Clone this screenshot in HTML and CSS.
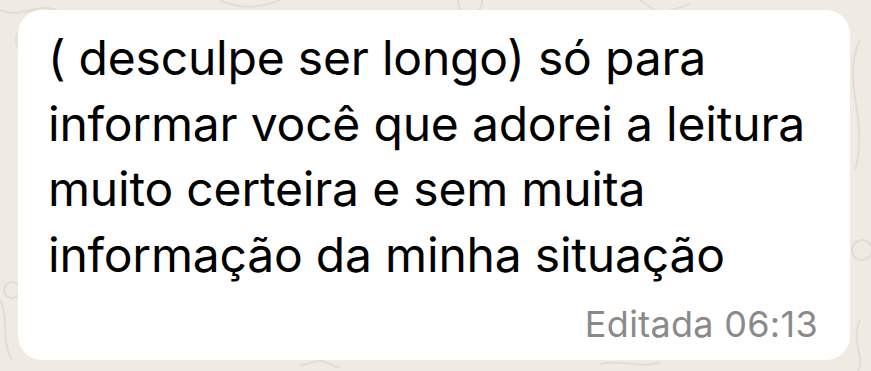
FILE: index.html
```html
<!DOCTYPE html>
<html lang="pt">

<head>
    <meta charset="UTF-8">
    <meta name="viewport" content="width=device-width, initial-scale=1.0">
    <title>Mensagem</title>
    <link rel="stylesheet" href="styles.css">
</head>

<body>
    <svg class="doodles" width="871" height="371" viewBox="0 0 871 371" fill="none" stroke="#e2dcd2" stroke-width="2">
        <circle cx="30" cy="40" r="14" />
        <path d="M0 10 C 20 20, 40 0, 60 12" />
        <path d="M220 0 C 240 10, 260 8, 280 0" />
        <circle cx="470" cy="2" r="12" />
        <path d="M640 0 L 660 14 L 690 4" />
        <path d="M860 40 C 840 80, 870 120, 855 170" />
        <circle cx="862" cy="250" r="10" />
        <path d="M0 300 C 10 320, 0 340, 12 360" />
        <circle cx="12" cy="290" r="8" />
        <path d="M860 320 C 850 340, 866 360, 858 371" />
        <path d="M300 366 L 320 360 L 340 368" />
        <path d="M600 364 C 620 358, 640 370, 660 362" />
    </svg>

    <div class="bubble">
        <p class="message">( desculpe ser longo) só para informar você que adorei a leitura muito certeira e sem muita informação da minha situação</p>
        <div class="meta">Editada 06:13</div>
    </div>
</body>

</html>
```

FILE: styles.css
```css
body {
    margin: 0;
    width: 871px;
    height: 371px;
    overflow: hidden;
    background-color: #efeae2;
    font-family: Inter, "Noto Sans", sans-serif;
    position: relative;
    padding: 10px 21px 11px 18px;
    box-sizing: border-box;
}

.doodles {
    position: absolute;
    left: 0;
    top: 0;
}

.bubble {
    position: relative;
    background: #ffffff;
    border-radius: 24px;
    height: 350px;
    box-sizing: border-box;
    padding: 15px 32px 16px 30px;
    display: flex;
    flex-direction: column;
}

.message {
    margin: 0;
    font-size: 48px;
    line-height: 65.5px;
    color: #000;
    letter-spacing: -0.2px;
    width: 780px;
}

.meta {
    margin-top: auto;
    align-self: flex-end;
    font-size: 36px;
    line-height: 40px;
    color: #8a8a8a;
    letter-spacing: 0.3px;
}
```
